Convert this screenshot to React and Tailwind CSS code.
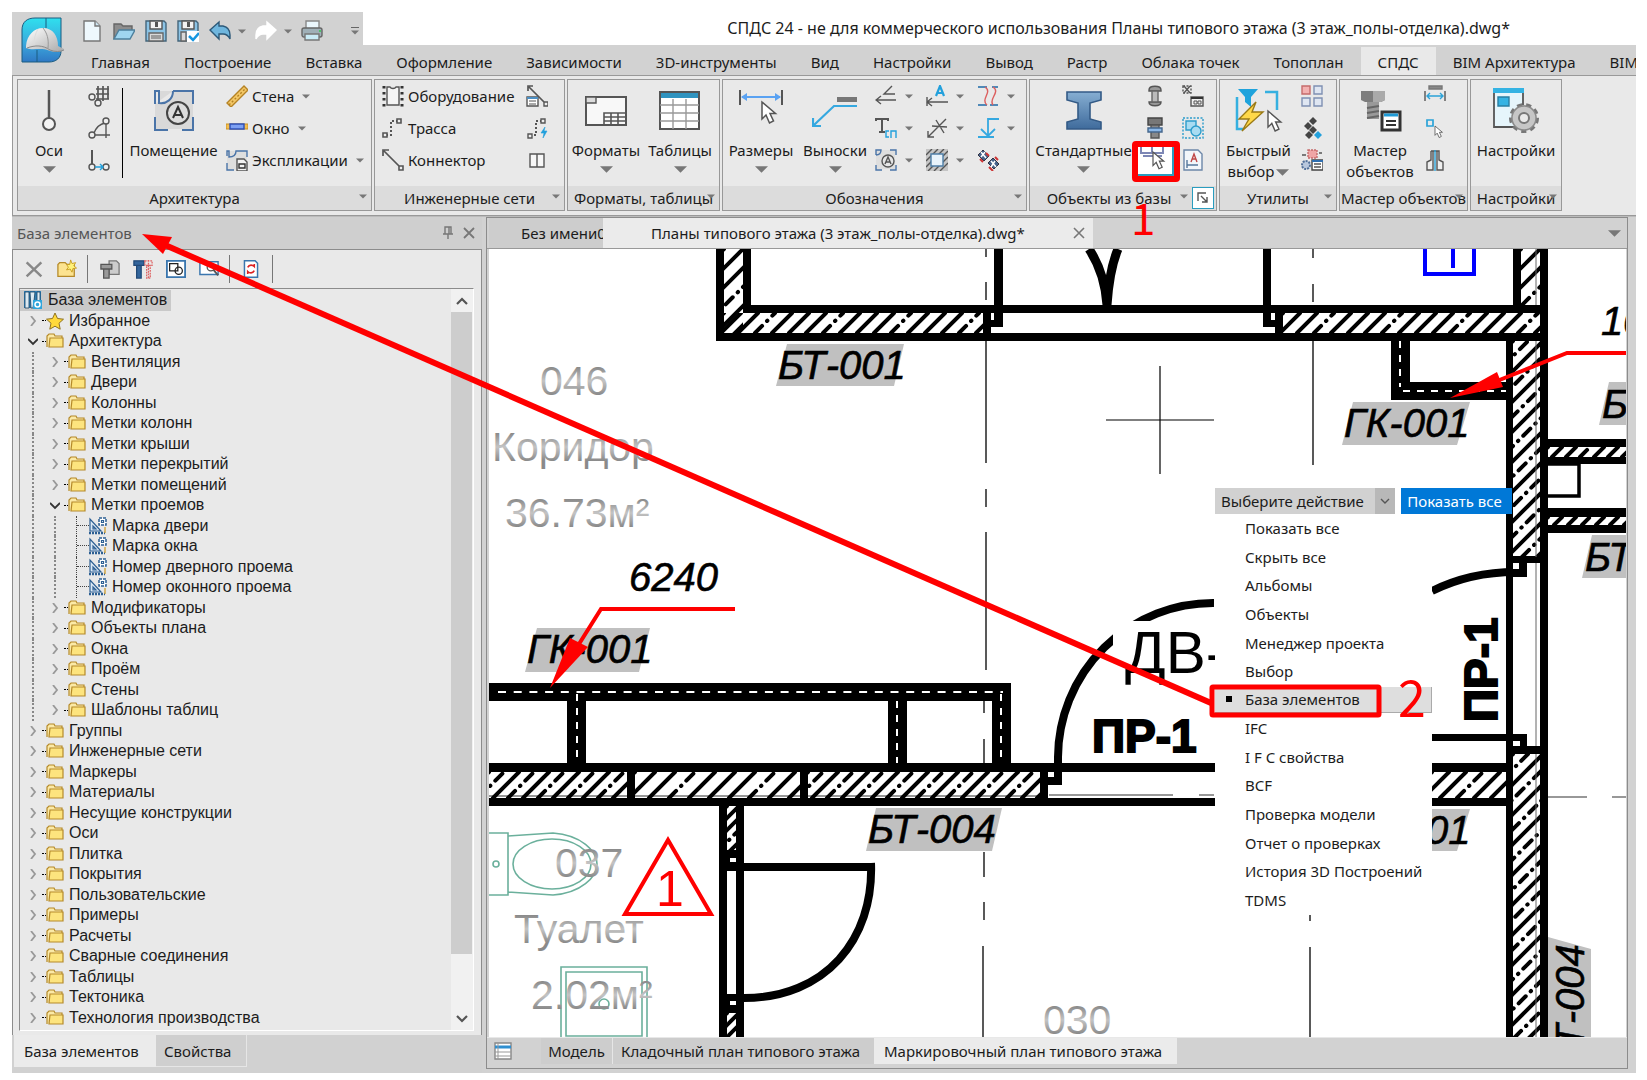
import { useState } from 'react';
import clsx from 'clsx';

/* ---------- small shared bits ---------- */

function Ico({ children, box = '0 0 22 22', className = 'size-[22px]' }) {
  return (
    <svg viewBox={box} className={clsx('shrink-0', className)} fill="none" stroke="#555" strokeWidth="1.4" aria-hidden="true">
      {children}
    </svg>
  );
}

function Down({ big }) {
  return (
    <svg viewBox="0 0 12 6" className={big ? 'h-[7px] w-[13px]' : 'h-[5px] w-2'} aria-hidden="true">
      <path d="M0 0h12L6 6z" fill="#777" />
    </svg>
  );
}

const Cursor = ({ x = 0, y = 0, s = 1 }) => (
  <path
    transform={`translate(${x} ${y}) scale(${s})`}
    d="M0 0v17l4-4 3.500 8 4-2-3.500-7.500h5.500z"
    fill="#fff"
    stroke="#555"
    strokeWidth="1.500"
  />
);

/* ---------- quick access icons ---------- */

const quick = [
  {
    name: 'Новый',
    icon: (
      <Ico>
        <path d="M3 1h11l5 5v15H3z" fill="#eef8fd" stroke="#777" />
        <path d="M14 1v5h5" fill="#cfe6f2" stroke="#777" />
      </Ico>
    ),
  },
  {
    name: 'Открыть',
    icon: (
      <Ico>
        <path d="M1 19V4h7l2 2h9v4" fill="#8d8d8d" stroke="#666" />
        <path d="M1 19l5-9h16l-5 9z" fill="#9fd5f0" stroke="#4c7f9c" />
      </Ico>
    ),
  },
  {
    name: 'Сохранить',
    icon: (
      <Ico>
        <path d="M1 1h18l2 2v18H1z" fill="#8cc4e6" stroke="#44657b" />
        <path d="M5 1h12v8H5z" fill="#f3f3f3" stroke="#555" />
        <path d="M10 2h3v5h-3z" fill="#555" stroke="none" />
        <path d="M4 13h14v8H4z" fill="#d9d9d9" stroke="#666" />
        <path d="M6 16h10M6 18h10" stroke="#888" />
      </Ico>
    ),
  },
  {
    name: 'Сохранить как',
    icon: (
      <Ico>
        <path d="M1 1h18l2 2v18H1z" fill="#8cc4e6" stroke="#44657b" />
        <path d="M5 1h12v8H5z" fill="#f3f3f3" stroke="#555" />
        <path d="M10 2h3v5h-3z" fill="#555" stroke="none" />
        <path d="M4 12h5v9H4z" fill="#d9d9d9" stroke="#666" />
        <path d="M10 11h12v11H10z" fill="#fff" stroke="none" />
        <path d="M12 16l4 4 6-7" stroke="#1596e0" strokeWidth="2.500" />
      </Ico>
    ),
  },
  {
    name: 'Отменить',
    more: true,
    icon: (
      <Ico>
        <path d="M1 10l9-8v4h4c5 1 7 5 7 9v4c-2-4-4-5-7-5h-4v5z" fill="#6fb6de" stroke="#2c5878" />
      </Ico>
    ),
  },
  {
    name: 'Вернуть',
    more: true,
    icon: (
      <Ico>
        <path d="M21 10l-9-8v4H8c-5 1-7 5-7 9v4c2-4 4-5 7-5h4v5z" fill="#fff" stroke="#fff" />
      </Ico>
    ),
  },
  {
    name: 'Печать',
    icon: (
      <Ico>
        <path d="M5 8V1h13v7" fill="#eaf6fc" stroke="#888" />
        <rect x="1" y="8" width="20" height="9" rx="2" fill="#9fb0b8" stroke="#666" />
        <path d="M4 17v-3h14v6H4z" fill="#c9ecf7" stroke="#777" />
        <path d="M18 11h2" stroke="#4fc36c" strokeWidth="2" />
      </Ico>
    ),
  },
];

function Logo() {
  return (
    <svg viewBox="0 0 43 46" className="h-[46px] w-[43px]" aria-hidden="true">
      <defs>
        <linearGradient id="lg" x1="0" y1="0" x2="0" y2="1">
          <stop offset="0" stopColor="#2fe0ee" />
          <stop offset=".6" stopColor="#3ba6dc" />
          <stop offset="1" stopColor="#2f78c4" />
        </linearGradient>
        <linearGradient id="hl" x1="0" y1="0" x2="1" y2="1">
          <stop offset="0" stopColor="#ffffff" />
          <stop offset="1" stopColor="#a8a8a8" />
        </linearGradient>
      </defs>
      <path d="M14 1h26v33c0 7-5 11-12 11H1V13C1 5 6 1 14 1z" fill="url(#lg)" stroke="#1b5c80" />
      <path d="M25 1v12M16 33v12" stroke="#1b5c80" />
      <path d="M5 29C6 18 13 11 22 11c10 0 15 8 15 18l6 3c0 3-8 4-14 2C20 30 12 34 5 31z" fill="url(#hl)" />
      <path d="M22 11c4 5 6 11 5 20" stroke="#999" fill="none" />
      <path d="M17 12c-3 5-4 10-4 17" stroke="#ddd" fill="none" />
      <path d="M6 31c8-3 16-3 23 2 5 2 10 2 14 0" stroke="#8a8a8a" fill="none" />
    </svg>
  );
}

/* ---------- ribbon icons ---------- */

const ic = {
  axis: (
    <Ico box="0 0 16 44" className="h-11 w-4">
      <path d="M8 2v28" strokeWidth="2.500" />
      <circle cx="8" cy="36" r="6" fill="#f4f4f4" strokeWidth="2" />
    </Ico>
  ),
  axisGrid: (
    <Ico>
      <path d="M8 4h13M8 9h13M8 14h13M10 1v14M15 1v15M20 1v13" strokeWidth="1.700" />
      <circle cx="4" cy="12" r="3" fill="#eee" />
      <circle cx="10" cy="18" r="3" fill="#eee" />
    </Ico>
  ),
  axisArc: (
    <Ico>
      <path d="M6 18h16M18 6v15M6 16C8 11 12 7 17 6" />
      <circle cx="18" cy="4" r="3" fill="#eee" />
      <circle cx="4" cy="18" r="3" fill="#eee" />
    </Ico>
  ),
  axisMove: (
    <Ico>
      <path d="M4 1v14" strokeWidth="2" />
      <circle cx="4" cy="18" r="3" fill="#eee" />
      <circle cx="18" cy="18" r="3" fill="#eee" />
      <path d="M7 18h8M12 15l3 3-3 3" stroke="#22a0dc" />
    </Ico>
  ),
  room: (
    <Ico box="0 0 42 44" className="h-11 w-[42px]">
      <path d="M2 3h38v38H2z" fill="#d9d9d9" stroke="none" />
      <path d="M2 16V3h4v12c8 1 14-4 14-12" fill="#e9e9e9" stroke="#4a74a8" strokeWidth="2" />
      <path d="M20 3h20v13M2 29v13h13M29 42h11V29" stroke="#4a74a8" strokeWidth="2" />
      <circle cx="25" cy="25" r="11" fill="#dcdcdc" stroke="#444" strokeWidth="2" />
      <path d="M20 30l5-11 5 11M22 27h6" stroke="#333" strokeWidth="2" />
    </Ico>
  ),
  wall: (
    <Ico>
      <path d="M1 18L18 1l4 4L5 22z" fill="#f3c766" stroke="#b58324" />
      <path d="M3 20L20 3" stroke="#b58324" strokeDasharray="2 2" />
    </Ico>
  ),
  windowI: (
    <Ico>
      <path d="M0 7h22v5H0z" fill="#f5bf4e" stroke="#c89127" strokeWidth="1" />
      <path d="M4 7h14v5H4z" fill="#7da0f2" stroke="#2e50b8" />
    </Ico>
  ),
  expl: (
    <Ico>
      <path d="M1 2h20v19H1z" fill="#dedede" stroke="none" />
      <path d="M1 7V2h2v6c4 0 7-2 7-6h11v6M1 14v7h7" stroke="#4a74a8" />
      <path d="M11 10h7l3 3v9H11z" fill="#f2f2f2" stroke="#555" />
      <path d="M13 15h6v4h-6z" stroke="#333" />
    </Ico>
  ),
  equip: (
    <Ico>
      <path d="M5 2h3c1 2 5 2 6 0h3v18H5z" fill="#f5f5f5" />
      <path d="M2 1v21M20 1v21" stroke="#333" strokeWidth="3" strokeDasharray="2.500 3.500" />
    </Ico>
  ),
  route: (
    <Ico>
      <path d="M4 18h5V4h7" strokeDasharray="2 2" strokeWidth="2" />
      <path d="M1 16h4v4H1zM15 2h4v4h-4z" fill="#eee" strokeWidth="1.600" />
    </Ico>
  ),
  connector: (
    <Ico>
      <path d="M2 2l15 15M1 7V1h6" strokeWidth="1.700" />
      <path d="M17 17h4v4h-4z" fill="#eee" strokeWidth="1.600" />
    </Ico>
  ),
  connTable: (
    <Ico>
      <path d="M3 2l15 15M2 6V1h5" strokeWidth="1.700" />
      <path d="M18 17h4v4h-4z" fill="#eee" />
      <path d="M1 12h11v9H1z" fill="#fff" />
      <path d="M1 13h11" stroke="#4c8fc4" strokeWidth="2" />
      <path d="M3 16h7M3 19h7" strokeWidth="1" />
    </Ico>
  ),
  routeBolt: (
    <Ico>
      <path d="M4 18h6V4h6" strokeDasharray="2 2" strokeWidth="2" />
      <path d="M2 17h4v4H2zM15 2h4v4h-4z" fill="#eee" />
      <path d="M19 10l-4 6h3l-1 5 4-7h-3z" fill="#22a0dc" stroke="#22a0dc" strokeWidth=".6" />
    </Ico>
  ),
  split: (
    <Ico>
      <path d="M4 5h7v13H4zM11 5h7v13h-7z" fill="#f7f7f7" />
    </Ico>
  ),
  format: (
    <Ico box="0 0 42 44" className="h-11 w-[42px]">
      <path d="M1 9h40v28H1z" fill="#f8f8f8" strokeWidth="2" />
      <path d="M1 9h10v6H1z" fill="#ddd" />
      <path d="M19 25h22v12H19zM19 29h22M19 33h22M26 25v12M33 25v12" strokeWidth="1.600" />
    </Ico>
  ),
  table: (
    <Ico box="0 0 42 44" className="h-11 w-[42px]">
      <path d="M1 4h39v37H1z" fill="#fff" strokeWidth="2" />
      <path d="M2 5h37v5H2z" fill="#2f93bf" stroke="none" />
      <path d="M1 17h39M1 25h39M1 33h39M14 11v30M27 11v30" stroke="#999" />
    </Ico>
  ),
  dims: (
    <Ico box="0 0 46 44" className="h-11 w-[46px]">
      <path d="M2 2v15M44 2v15" strokeWidth="2" />
      <path d="M4 9h38" stroke="#5aa2f2" strokeWidth="2" />
      <path d="M9 5L3 9l6 4zM37 5l6 4-6 4z" fill="#5aa2f2" stroke="none" />
      <Cursor x={24} y={14} />
    </Ico>
  ),
  leader: (
    <Ico box="0 0 46 44" className="h-11 w-[46px]">
      <path d="M25 9h20v5H25z" fill="#777" stroke="none" />
      <path d="M45 18H22L2 37M1 30v8h8" stroke="#35a8e0" strokeWidth="2.200" />
    </Ico>
  ),
  d1: (
    <Ico>
      <path d="M1 15h20M6 11l-5 4 5 4M20 9H9l8-8" />
    </Ico>
  ),
  d2: (
    <Ico>
      <path d="M1 12v9M1 17h21M6 13l-5 4 5 4" />
      <path d="M10 11l4-10 4 10M12 8h5" stroke="#22a0dc" strokeWidth="2.200" />
    </Ico>
  ),
  d3: (
    <Ico>
      <path d="M1 2h9M15 2h6M1 20h9M13 20h8" stroke="#4f89b8" strokeWidth="1.800" />
      <path d="M8 2c8 5-5 12 2 18M16 2c8 5-5 12 0 18" stroke="#dc5f5f" />
    </Ico>
  ),
  d4: (
    <Ico>
      <path d="M1 4V2h12v2M7 2v13M4 15h6" strokeWidth="2" />
      <path d="M14 14h-3v6h3M16 21v-7h5v7" stroke="#22a0dc" />
    </Ico>
  ),
  d5: (
    <Ico>
      <path d="M20 2L2 20M2 14v6h6M6 9l15 1M10 3l8 13" />
    </Ico>
  ),
  d6: (
    <Ico>
      <path d="M22 2H11v17M4 12l7 7 7-7M1 20h16" stroke="#35a8e0" strokeWidth="1.800" />
    </Ico>
  ),
  d7: (
    <Ico>
      <path d="M1 1h19v19H1z" fill="#dedede" stroke="none" />
      <path d="M1 6V1h5c0 4-2 5-5 5M15 1h6v5M1 16v5h6M15 21h6v-5" stroke="#4a74a8" />
      <circle cx="13" cy="12" r="6" fill="#e6e6e6" />
      <path d="M10 15l3-7 3 7M11 13h4" />
    </Ico>
  ),
  d8: (
    <Ico>
      <path d="M0 0h22v22H0z" fill="#c5c5c5" stroke="none" />
      <path d="M0 6l6-6M0 12L12 0M0 18L18 0M2 22L22 2M8 22L22 8M14 22l8-8" stroke="#555" />
      <path d="M5 5h12v12H5z" fill="#e8f3fb" stroke="#4f7fa8" />
    </Ico>
  ),
  d9: (
    <Ico>
      <g strokeWidth="1">
        <path d="M1 6l5-5 6 6-5 5zM11 14l5-5 6 6-5 5z" fill="#46638c" stroke="#334" />
        <path d="M4 3l5 6M8 3l-4 5M14 12l5 6M18 12l-4 6" stroke="#fff" strokeWidth="1.500" />
        <path d="M9 4l3 3M3 10l3 3M12 18l4 4M18 8l3 3" stroke="#c33" strokeWidth="2" />
      </g>
    </Ico>
  ),
  beam: (
    <Ico box="0 0 38 44" className="h-11 w-[38px]">
      <defs>
        <linearGradient id="beam" x1="0" y1="0" x2="0" y2="1">
          <stop offset="0" stopColor="#86aed2" />
          <stop offset="1" stopColor="#3f6b9c" />
        </linearGradient>
      </defs>
      <path d="M2 4h34v8l-11 3v16l11 3v7H2v-7l11-3V15L2 12z" fill="url(#beam)" stroke="#335a86" strokeWidth="1.600" />
    </Ico>
  ),
  rivet: (
    <Ico>
      <path d="M5 5c0-5 12-5 12 0v1H5zM5 17h12c0 5-12 5-12 0z" fill="#999" stroke="#555" />
      <path d="M8 6h6v11H8z" fill="#bbb" stroke="#666" />
    </Ico>
  ),
  bolt: (
    <Ico>
      <path d="M4 1h14v7H4z" fill="#777" stroke="#444" />
      <path d="M7 8h8v13H7z" fill="#888" stroke="#555" />
      <path d="M4 11h14v4H4z" fill="#8bb8e8" stroke="#44668c" />
    </Ico>
  ),
  node: (
    <Ico>
      <path d="M1 1h8v7H1z" strokeDasharray="2 1.500" />
      <path d="M2 1l6 7M8 1L2 8" />
      <path d="M9 12h12v9H9z" fill="#eee" />
      <path d="M9 13h12" stroke="#333" strokeWidth="2" />
      <path d="M12 16h3v3h-3zM16 16h3v3h-3z" strokeWidth="1" />
    </Ico>
  ),
  groupSel: (
    <Ico>
      <path d="M1 1h20v20H1z" stroke="#2c9ccb" strokeDasharray="2 1.500" />
      <path d="M4 4h10v9H4z" fill="#a8dcf2" stroke="#2c9ccb" />
      <circle cx="14" cy="14" r="5" fill="#a8dcf2" stroke="#2c9ccb" />
    </Ico>
  ),
  docA: (
    <Ico>
      <path d="M2 1h14l4 4v16H2z" fill="#f3f6fa" stroke="#6c87a8" />
      <path d="M9 13l3-8 3 8M10 10h4" stroke="#c04545" />
      <path d="M5 11v8M5 16h11" stroke="#55779c" />
    </Ico>
  ),
  pick: (
    <Ico box="0 0 34 28" className="h-7 w-[34px]">
      <path d="M3 1v6h22V1M14 1v6M5 10h19" stroke="#7d87b5" strokeWidth="2" />
      <Cursor x={15} y={6} s={0.8} />
    </Ico>
  ),
  fast: (
    <Ico box="0 0 48 46" className="h-[46px] w-12">
      <path d="M2 10v32h6M30 5h12v18" stroke="#35b0e0" strokeWidth="2.500" />
      <path d="M3 2h20l-7 8v10l-6-5v-5z" fill="#1fa3dc" stroke="none" />
      <path d="M21 15L4 32h10l-7 12 21-19H17z" fill="#ffd84a" stroke="#9a7a16" />
      <Cursor x={33} y={24} s={0.95} />
    </Ico>
  ),
  squares: (
    <Ico>
      <path d="M1 1h8v8H1z" fill="#f3b1b1" stroke="#c56b6b" />
      <path d="M13 1h8v8h-8zM1 13h8v8H1zM13 13h8v8h-8z" fill="#dfe6f2" stroke="#7f90b3" />
    </Ico>
  ),
  dots: (
    <Ico>
      <g fill="#444" stroke="none">
        <path d="M12 0l4 4-4 4-4-4zM7 5l4 4-4 4-4-4zM12 9l4 4-4 4-4-4zM8 14l4 4-4 4-4-4z" />
        <path d="M17 14l4 4-4 4-4-4z" fill="#22a0dc" />
      </g>
    </Ico>
  ),
  gears: (
    <Ico>
      <path d="M7 1h9v8H7z" fill="#f0a5a5" stroke="#c56b6b" strokeDasharray="2 1" />
      <circle cx="5" cy="16" r="4" fill="#b8c7dd" stroke="#52709a" strokeWidth="2" strokeDasharray="2 1" />
      <path d="M11 11h11v10H11z" fill="#fff" stroke="#444" />
      <path d="M11 12h11" stroke="#2f6fb0" strokeWidth="2" />
      <path d="M13 15h7M13 18h7M1 6h4M18 4h3" />
    </Ico>
  ),
  master: (
    <Ico box="0 0 44 44" className="size-11">
      <path d="M3 3h24v9l-4 2H7l-4-2z" fill="#7d7d7d" stroke="none" />
      <path d="M15 3h12v9l-4 2h-8z" fill="#aaa" stroke="none" />
      <path d="M9 14h12v17H9z" fill="#999" stroke="none" />
      <path d="M9 20l12-2M9 25l12-2M9 30l12-2" stroke="#666" strokeWidth="2" />
      <path d="M24 24h18v18H24z" fill="#fff" stroke="#333" strokeWidth="3" />
      <path d="M26 27h14" stroke="#1f9ad6" strokeWidth="3" />
      <path d="M28 33h10M28 37h10" stroke="#333" strokeWidth="2" />
    </Ico>
  ),
  m1: (
    <Ico>
      <path d="M5 1h13v3H5z" fill="#888" stroke="#777" />
      <path d="M1 6v10M21 6v10" />
      <path d="M3 11h16M6 8l-3 3 3 3M16 8l3 3-3 3" stroke="#2ba3d8" />
    </Ico>
  ),
  m2: (
    <Ico>
      <path d="M3 3h6v6H3z" stroke="#2ba3d8" strokeWidth="1.700" />
      <Cursor x={11} y={9} s={0.55} />
    </Ico>
  ),
  m3: (
    <Ico>
      <path d="M7 2h8v9l4 2v8h-6V2M9 2v19H3v-8l4-2V2" fill="#eee" stroke="#555" />
      <path d="M11 1v21" stroke="#2ba3d8" />
    </Ico>
  ),
  settings: (
    <Ico box="0 0 48 46" className="h-[46px] w-12">
      <path d="M2 2h29v38H2z" fill="#e6f5fb" strokeWidth="1.800" />
      <path d="M1 1h31v5H1z" fill="#35b3e3" stroke="none" />
      <path d="M6 10h11v9H6z" fill="#35b3e3" stroke="#287fa3" />
      <circle cx="32" cy="31" r="13" fill="#bdbdbd" stroke="#777" strokeWidth="4" strokeDasharray="5 4" />
      <circle cx="32" cy="31" r="12" fill="#c6c6c6" stroke="#8a8a8a" />
      <circle cx="32" cy="31" r="5" fill="#e9e9e9" stroke="#777" strokeWidth="2" />
    </Ico>
  ),
};

/* ---------- ribbon ---------- */

const tabs = [
  'Главная', 'Построение', 'Вставка', 'Оформление', 'Зависимости', '3D-инструменты', 'Вид', 'Настройки',
  'Вывод', 'Растр', 'Облака точек', 'Топоплан', 'СПДС', 'BIM Архитектура', 'BIM',
];

function Panel({ title, className, children, extra }) {
  return (
    <section className={clsx('flex shrink-0 flex-col border border-[#989898] bg-[#e9e9e9]', className)}>
      <div className="flex h-[106px] overflow-hidden">{children}</div>
      <div className="relative flex h-6 items-center justify-center bg-[#dcdcdc] whitespace-nowrap">
        <span className={clsx('w-full overflow-hidden text-center', extra && 'pr-1')}>{title}</span>
        <span className={clsx('absolute top-2', extra ? 'right-7' : 'right-1')}>
          <Down />
        </span>
        {extra}
      </div>
    </section>
  );
}

function Big({ icon, label, more, className }) {
  return (
    <button className={clsx('flex shrink-0 flex-col items-center whitespace-nowrap', className)}>
      <span className="flex h-[60px] items-center">{icon}</span>
      <span className="leading-[21px] whitespace-pre">{label}</span>
      {more && <span className="flex h-4 items-center"><Down big /></span>}
    </button>
  );
}

function Small({ icon, label, more, className }) {
  return (
    <button className={clsx('flex h-8 items-center gap-1 whitespace-nowrap', className)} aria-label={label ? undefined : 'Команда'}>
      {icon}
      {label && <span>{label}</span>}
      {more && <span className="ml-1"><Down /></span>}
    </button>
  );
}

function Ribbon() {
  return (
    <div className="flex gap-[2px] overflow-hidden border-b border-l border-[#999] bg-[#e9e9e9] pt-[3px] pb-1 pl-1">
      <Panel title="Архитектура" className="w-[355px]">
        <Big icon={ic.axis} label="Оси" more className="w-[62px]" />
        <div className="w-[42px] pl-2">
          <Small icon={ic.axisGrid} />
          <Small icon={ic.axisArc} />
          <Small icon={ic.axisMove} />
        </div>
        <div className="my-2 w-px bg-black" />
        <Big icon={ic.room} label="Помещение" className="w-[101px]" />
        <div className="pl-[2px]">
          <Small icon={ic.wall} label="Стена" more />
          <Small icon={ic.windowI} label="Окно" more />
          <Small icon={ic.expl} label="Экспликации" more />
        </div>
      </Panel>
      <Panel title="Инженерные сети" className="w-[191px]">
        <div className="w-[151px] pl-[7px]">
          <Small icon={ic.equip} label="Оборудование" />
          <Small icon={ic.route} label="Трасса" />
          <Small icon={ic.connector} label="Коннектор" />
        </div>
        <div>
          <Small icon={ic.connTable} />
          <Small icon={ic.routeBolt} />
          <Small icon={ic.split} />
        </div>
      </Panel>
      <Panel title="Форматы, таблицы" className="w-[153px]">
        <Big icon={ic.format} label="Форматы" more className="w-[76px]" />
        <Big icon={ic.table} label="Таблицы" more className="w-[72px]" />
      </Panel>
      <Panel title="Обозначения" className="w-[305px]">
        <Big icon={ic.dims} label="Размеры" more className="w-[76px]" />
        <Big icon={ic.leader} label="Выноски" more className="w-[72px]" />
        <div className="w-[51px] pl-1">
          <Small icon={ic.d1} more />
          <Small icon={ic.d4} more />
          <Small icon={ic.d7} more />
        </div>
        <div className="w-[51px] pl-1">
          <Small icon={ic.d2} more />
          <Small icon={ic.d5} more />
          <Small icon={ic.d8} more />
        </div>
        <div className="w-[51px] pl-1">
          <Small icon={ic.d3} more />
          <Small icon={ic.d6} more />
          <Small icon={ic.d9} />
        </div>
      </Panel>
      <Panel
        title="Объекты из базы"
        className="w-[188px]"
        extra={
          <button className="mr-[2px] flex size-[22px] shrink-0 items-center justify-center border border-[#2a9dbf] bg-white" aria-label="Параметры">
            <Ico className="size-3" box="0 0 12 12">
              <path d="M1 9V1h8M4 4l6 6M10 5v5H5" />
            </Ico>
          </button>
        }
      >
        <Big icon={ic.beam} label="Стандартные" more className="w-[107px]" />
        <div className="flex w-[36px] flex-col items-center">
          <Small icon={ic.rivet} />
          <Small icon={ic.bolt} />
          <button className="border-2 border-[#2a9dbf] bg-white" aria-label="База элементов">{ic.pick}</button>
        </div>
        <div className="pl-[9px]">
          <Small icon={ic.node} />
          <Small icon={ic.groupSel} />
          <Small icon={ic.docA} />
        </div>
      </Panel>
      <Panel title="Утилиты" className="w-[118px]">
        <Big
          icon={ic.fast}
          className="w-[77px]"
          label={
            <>
              {'Быстрый\nвыбор'}
              <span className="ml-[2px] inline-block align-middle"><Down big /></span>
            </>
          }
        />
        <div className="pl-1">
          <Small icon={ic.squares} />
          <Small icon={ic.dots} />
          <Small icon={ic.gears} />
        </div>
      </Panel>
      <Panel title="Мастер объектов" className="w-[129px]">
        <Big icon={ic.master} label={'Мастер\nобъектов'} className="w-[80px]" />
        <div className="pl-1">
          <Small icon={ic.m1} />
          <Small icon={ic.m2} />
          <Small icon={ic.m3} />
        </div>
      </Panel>
      <Panel title="Настройки" className="w-[92px]">
        <Big icon={ic.settings} label="Настройки" className="w-full" />
      </Panel>
    </div>
  );
}

function Header() {
  return (
    <header className="flex">
      <div className="w-[62px] shrink-0 border-b border-[#999] bg-[#d2d2d2] pt-[5px] pl-[9px]">
        <Logo />
      </div>
      <div className="min-w-0 flex-1">
        <div className="flex h-[33px]">
          <div className="flex w-[289px] shrink-0 items-center bg-[#d2d2d2] pt-[5px] pl-[2px]">
            {quick.map((q) => (
              <span key={q.name} className="flex items-center">
                <button className="mx-[5px]" aria-label={q.name}>{q.icon}</button>
                {q.more && <span className="mr-1 ml-[2px]"><Down /></span>}
              </span>
            ))}
            <span className="mr-1 ml-auto flex flex-col items-center gap-[2px]">
              <span className="h-px w-2 bg-[#666]" />
              <Down />
            </span>
          </div>
          <h1 className="flex-1 truncate pr-[126px] text-right text-[16px] leading-[32px]">
            СПДС 24 - не для коммерческого использования Планы типового этажа (3 этаж_полы-отделка).dwg*
          </h1>
        </div>
        <nav className="flex h-[31px] items-end overflow-hidden border-b border-[#999] bg-[#d2d2d2] whitespace-nowrap">
          {tabs.map((t) => (
            <button
              key={t}
              className={clsx('h-7 shrink-0 px-[17px] pt-[2px]', t === 'СПДС' && 'bg-[#e9e9e9]')}
            >
              {t}
            </button>
          ))}
        </nav>
      </div>
    </header>
  );
}

/* ---------- element base tree ---------- */

const sub = (names) => names.map((n) => ({ level: 2, name: n }));

const tree = [
  { level: 1, name: 'Избранное', icon: 'star' },
  { level: 1, name: 'Архитектура', open: true },
  ...sub(['Вентиляция', 'Двери', 'Колонны', 'Метки колонн', 'Метки крыши', 'Метки перекрытий', 'Метки помещений']),
  { level: 2, name: 'Метки проемов', open: true },
  { level: 3, name: 'Марка двери' },
  { level: 3, name: 'Марка окна' },
  { level: 3, name: 'Номер дверного проема' },
  { level: 3, name: 'Номер оконного проема', last: true },
  ...sub(['Модификаторы', 'Объекты плана', 'Окна', 'Проём', 'Стены', 'Шаблоны таблиц']),
  ...[
    'Группы', 'Инженерные сети', 'Маркеры', 'Материалы', 'Несущие конструкции', 'Оси', 'Плитка', 'Покрытия',
    'Пользовательские', 'Примеры', 'Расчеты', 'Сварные соединения', 'Таблицы', 'Тектоника', 'Технология производства',
  ].map((n) => ({ level: 1, name: n })),
];

function Folder() {
  return (
    <Ico box="0 0 18 16" className="h-4 w-[18px]">
      <path d="M1 14V3l2-2h5l1 2h7v3" fill="#fbe9a6" stroke="#b58a2a" strokeWidth="1.200" />
      <path d="M4 5h13v9H3z" fill="#fde47e" stroke="#b58a2a" strokeWidth="1.200" />
    </Ico>
  );
}

function Star() {
  return (
    <Ico box="0 0 18 18" className="size-[18px]">
      <path d="M9 1l2.500 5.500 6 .7-4.500 4 1.200 6L9 14.200 3.800 17.200 5 11.200.5 7.200l6-.7z" fill="#ffd93b" stroke="#8f7320" strokeWidth="1" />
    </Ico>
  );
}

function Mark() {
  return (
    <Ico box="0 0 18 18" className="size-[18px]">
      <path d="M1 2v12h11zM4 9v3h3z" fill="#dce9f5" stroke="#2c5f93" strokeWidth="1.200" />
      <path d="M0 16h16" stroke="#2c5f93" strokeWidth="2.500" strokeDasharray="2 1" />
      <path d="M10 1h7v7h-7z" fill="#fff" stroke="#2c5f93" strokeWidth="1.500" strokeDasharray="3 1" />
      <path d="M12.500 3.500h2v2h-2z" stroke="#2c5f93" strokeWidth="1.200" />
      <path d="M16 10v6" stroke="#d1a23a" />
    </Ico>
  );
}

function Chevron({ open }) {
  return (
    <Ico box="0 0 10 10" className="size-[10px]">
      {open ? <path d="M0 3l5 5 5-5" stroke="#333" strokeWidth="1.800" /> : <path d="M3 0l4 5-4 5" stroke="#999" strokeWidth="1.800" />}
    </Ico>
  );
}

function TreeRow({ node }) {
  const { level, name, open, icon, last } = node;
  return (
    <li className="flex flex-1 items-center">
      {level > 1 && <span className="ml-3 h-full w-0 border-l-2 border-dotted border-[#888]" />}
      {level === 3 && <span className="ml-5 h-full w-0 border-l-2 border-dotted border-[#888]" />}
      {level === 3 ? (
        <span className="ml-5 flex h-full w-[13px] flex-col border-l border-dotted border-[#444]">
          <span className="h-1/2 border-b border-dotted border-[#444]" />
          {last && <span className="h-1/2 bg-[#e9e9e9]" />}
        </span>
      ) : (
        <>
          <span className={clsx('flex', level === 1 ? 'ml-2' : 'ml-4')}><Chevron open={open} /></span>
          <span className="ml-1 w-1 border-b border-dotted border-black" />
        </>
      )}
      {level === 3 ? <Mark /> : icon ? <Star /> : <Folder />}
      <button className="ml-[5px] leading-[20px] whitespace-nowrap">{name}</button>
    </li>
  );
}

function ToolDivider() {
  return <span className="mx-[10px] h-7 w-px bg-[#777]" />;
}

function Sidebar() {
  return (
    <aside className="flex w-[470px] shrink-0 flex-col">
      <div className="flex h-8 shrink-0 items-center bg-[#cfcfcf] pl-[5px] text-[#555]">
        <span className="flex-1">База элементов</span>
        <button className="mr-1" aria-label="Закрепить">
          <Ico box="0 0 14 14" className="size-[14px]">
            <path d="M4 1h6v7H4zM2 8h10M7 8v5M8 1v7" stroke="#777" />
          </Ico>
        </button>
        <button className="mr-[3px] p-1" aria-label="Закрыть">
          <Ico box="0 0 12 12" className="size-3">
            <path d="M1 1l10 10M11 1L1 11" stroke="#777" strokeWidth="1.800" />
          </Ico>
        </button>
      </div>
      <div className="flex min-h-0 flex-1 flex-col border-t border-r border-l border-[#8c8c8c] bg-[#e9e9e9] pr-[7px] pb-1 pl-[6px]">
        <div className="flex h-[38px] shrink-0 items-center pl-[6px]">
          <button className="mr-[14px]" aria-label="Удалить">
            <Ico className="size-[18px]"><path d="M2 3l18 17M20 3L2 20" stroke="#888" strokeWidth="3" /></Ico>
          </button>
          <button aria-label="Новая папка">
            <Ico className="size-5">
              <path d="M1 19V6l2-2h6l2 2h8v13z" fill="#fce390" stroke="#b58a2a" />
              <path d="M15 1l1.500 4 4-1-2 3.500 3 2.500-4 .5-1 4-2-3.500-4 1 2-3-2-3 3.500 0z" fill="#fff27a" stroke="#c79a20" strokeWidth="1" />
            </Ico>
          </button>
          <ToolDivider />
          <div className="flex gap-[13px] pl-[2px]">
            <button aria-label="Вставить">
              <Ico className="size-5">
                <path d="M10 2h8l3 3v12H10z" fill="#ccc" stroke="#777" />
                <path d="M1 6h12v5H1zM4 11h6v10H4z" fill="#999" stroke="#555" />
              </Ico>
            </button>
            <button aria-label="Обновить объекты">
              <Ico className="size-5">
                <path d="M1 2h11v5H1zM4 7h5v14H4z" fill="#33659c" stroke="#224a78" />
                <path d="M13 2h8v5h-8zM15 7h4v14h-4zM17 1v21" stroke="#d66" strokeDasharray="2 1" />
              </Ico>
            </button>
            <button aria-label="Показать фигуры">
              <Ico className="size-5">
                <path d="M1 2h20v18H1z" fill="#fff" stroke="#3a76ae" strokeWidth="2" />
                <path d="M4 5h9v8H4z" stroke="#222" />
                <circle cx="14" cy="13" r="4" stroke="#222" />
              </Ico>
            </button>
            <button aria-label="Поиск">
              <Ico className="size-5">
                <path d="M1 3h20v14H1z" fill="#fff" stroke="#3a76ae" strokeWidth="1.600" />
                <circle cx="13" cy="9" r="4" />
                <path d="M16 12l5 6" strokeWidth="2" />
              </Ico>
            </button>
          </div>
          <ToolDivider />
          <button className="mx-[2px]" aria-label="Обновить">
            <Ico className="size-[18px]">
              <path d="M3 1h13l3 3v17H3z" fill="#fff" stroke="#3a76ae" strokeWidth="1.800" />
              <path d="M7 9c2-4 6-3 8-1V5M15 13c-2 4-6 3-8 1v3" stroke="#d22" strokeWidth="2" />
            </Ico>
          </button>
          <ToolDivider />
        </div>
        <div className="flex min-h-0 flex-1 border border-t-[#8c8c8c] border-r-white border-b-white border-l-[#8c8c8c]">
          <ul className="flex flex-1 flex-col pt-px pb-[2px] font-['Liberation_Sans',sans-serif] text-[16px]">
            <li className="flex flex-1 items-center">
              <button className="flex h-full items-center gap-[6px] bg-[#c9c9c9] pr-1 pl-1 leading-[20px]">
                <Ico box="0 0 18 18" className="size-[18px]">
                  <path d="M0 0h17v17H0z" fill="#2f7fb5" stroke="none" />
                  <path d="M1 1h4v16H1zM6 1h5l-1 9-1 7H7zM13 1h3v9h-3z" fill="#dbe9f2" stroke="#16405f" strokeWidth=".8" />
                  <path d="M9 9h9v9H9z" fill="#2fa5dc" stroke="none" />
                  <circle cx="13.500" cy="13.500" r="2.500" stroke="#fff" strokeWidth="1.500" />
                </Ico>
                База элементов
              </button>
            </li>
            {tree.map((n) => <TreeRow key={n.name} node={n} />)}
          </ul>
          <div className="flex w-[22px] flex-col bg-[#f1f1f1]">
            <button className="flex h-[23px] shrink-0 items-center justify-center" aria-label="Вверх">
              <Ico box="0 0 12 8" className="h-2 w-3"><path d="M1 7l5-5 5 5" strokeWidth="2.200" /></Ico>
            </button>
            <div className="mr-px flex-[12] bg-[#cdcdcd]" />
            <div className="flex-1" />
            <button className="flex h-[23px] shrink-0 items-center justify-center" aria-label="Вниз">
              <Ico box="0 0 12 8" className="h-2 w-3"><path d="M1 1l5 5 5-5" strokeWidth="2.200" /></Ico>
            </button>
          </div>
        </div>
      </div>
      <div className="flex h-[38px] shrink-0 items-start bg-[#d1d1d1] pl-[2px]">
        <button className="h-8 w-[142px] bg-[#ebebeb] pl-[10px] text-left">База элементов</button>
        <button className="h-8 w-[91px] border-r border-b border-[#e6e6e6] bg-[#cfcfcf] pl-2 text-left">Свойства</button>
      </div>
    </aside>
  );
}

/* ---------- drawing ---------- */

// diagonal masonry hatch clipped to a wall rectangle
function Hatch({ x, y, w, h, step = 16, every = 4 }) {
  const id = `h${x}-${y}`;
  const lines = [];
  for (let k = x - h, i = 0; k < x + w; k += step, i++) lines.push({ k, dash: i % every === every - 1 });
  return (
    <g>
      <clipPath id={id}><rect x={x} y={y} width={w} height={h} /></clipPath>
      <g clipPath={`url(#${id})`} stroke="#000" strokeWidth="4" strokeLinecap="round">
        {lines.map(({ k, dash }) => (
          <line key={k} x1={k} y1={y + h} x2={k + h} y2={y} strokeDasharray={dash ? '10 7 0.500 7' : undefined} />
        ))}
      </g>
    </g>
  );
}

// [x1, y1, x2, y2] of every solid wall band
const solid = [
  [716, 249, 724, 341], [743, 249, 751, 313], [743, 305, 1548, 313], [716, 333, 1548, 341],
  [994, 249, 1003, 327], [983, 305, 991, 341], [991, 320, 1003, 327],
  [1263, 249, 1271, 327], [1263, 320, 1276, 327], [1275, 305, 1283, 341],
  [1513, 249, 1521, 313], [1540, 249, 1548, 1038], [1506, 333, 1513, 1038],
  [1391, 341, 1410, 400], [1391, 382, 1506, 400],
  [1548, 439, 1626, 447], [1548, 457, 1626, 464], [1548, 508, 1626, 517], [1548, 525, 1626, 533],
  [1506, 556, 1548, 563], [1513, 563, 1527, 577], [1506, 746, 1548, 754], [1506, 734, 1527, 741], [1520, 734, 1527, 748],
  [1432, 734, 1506, 741],
  [489, 683, 1011, 701], [567, 683, 586, 765], [888, 683, 907, 765], [992, 683, 1011, 765],
  [489, 763, 1506, 772], [489, 798, 1506, 806], [627, 763, 635, 806], [800, 763, 808, 806], [1040, 763, 1048, 806],
  [719, 806, 727, 1038], [736, 806, 744, 1038], [719, 850, 744, 871], [744, 863, 875, 871], [719, 994, 744, 1013],
];

const axes = [
  [986, 249, 257], [986, 282, 300], [986, 341, 463], [986, 489, 507], [986, 532, 670], [984, 701, 713], [984, 739, 765],
  [984, 852, 877], [984, 902, 920], [983, 946, 1038],
  [1313, 249, 258], [1313, 284, 302], [1313, 341, 465], [1310, 915, 921], [1310, 947, 1038],
];

function Tag({ x, y, children, bg }) {
  return (
    <g>
      {bg && <polygon points={bg} fill="#c0c0c0" />}
      <text x={x} y={y} fontSize="40" fontStyle="italic" fill="#000" stroke="#000" strokeWidth="0.600">{children}</text>
    </g>
  );
}

function Ghost({ x, y, children }) {
  return (
    <text x={x} y={y} fontSize="41" fill="url(#ghost)">{children}</text>
  );
}

function Plan() {
  return (
    <svg viewBox="489 249 1137 788" preserveAspectRatio="xMinYMin slice" className="absolute inset-0 h-full w-full font-['Liberation_Sans',sans-serif]" aria-label="План этажа">
      <defs>
        <linearGradient id="ghost" x1="0" y1="0" x2="0" y2="1">
          <stop offset=".2" stopColor="#8a8a8a" />
          <stop offset=".5" stopColor="#c4c4c4" />
          <stop offset=".8" stopColor="#8a8a8a" />
        </linearGradient>
      </defs>

      <Tag x={778} y={379} bg="787,344 904,344 894,386 776,386">БТ-001</Tag>
      <Tag x={527} y={663} bg="537,628 650,628 639,672 525,672">ГК-001</Tag>
      <Tag x={868} y={843} bg="876,808 1002,808 992,851 866,851">БТ-004</Tag>
      <Tag x={1344} y={437} bg="1353,402 1470,402 1457,445 1342,445">ГК-001</Tag>
      <Tag x={1345} y={844} bg="1353,809 1470,809 1457,851 1342,851">ГК-001</Tag>
      <Tag x={1602} y={418} bg="1609,382 1640,382 1640,425 1599,425">Б</Tag>
      <Tag x={1585} y={571} bg="1592,535 1640,535 1640,578 1582,578">БТ</Tag>
      <polygon points="1548,937 1591,949 1591,1038 1548,1038" fill="#c0c0c0" />
      <g transform="translate(1584 1072) rotate(-90)"><Tag x={0} y={0}>БТ-004</Tag></g>
      <Tag x={629} y={591}>6240</Tag>
      <Tag x={1601} y={335}>10</Tag>

      {axes.map(([x, a, b]) => <line key={`${x}-${a}`} x1={x} x2={x} y1={a} y2={b} stroke="#222" strokeWidth="1.500" />)}
      <path d="M489 796H1040M1049 795h124M1199 795h15M1548 797h39M1612 797h14" stroke="#333" strokeWidth="1.200" />

      <Hatch x={724} y={249} w={19} h={90} step={19} />
      <Hatch x={724} y={313} w={259} h={20} step={17} />
      <Hatch x={1283} y={313} w={257} h={20} step={17} />
      <Hatch x={1521} y={249} w={19} h={56} step={19} />
      <Hatch x={1513} y={341} w={27} h={216} step={15} every={2} />
      <Hatch x={1513} y={754} w={27} h={284} step={15} every={2} />
      <Hatch x={1548} y={447} w={78} h={10} step={14} />
      <Hatch x={1548} y={517} w={78} h={8} step={14} />
      <Hatch x={489} y={772} w={138} h={26} step={15} every={2} />
      <Hatch x={635} y={772} w={165} h={26} step={20} every={4} />
      <Hatch x={808} y={772} w={232} h={26} step={15} every={2} />
      <Hatch x={1432} y={772} w={74} h={26} step={17} />
      <Hatch x={727} y={806} w={9} h={46} step={12} />
      <Hatch x={727} y={1013} w={9} h={25} step={12} />

      {solid.map(([x1, y1, x2, y2]) => <rect key={`${x1}-${y1}-${x2}-${y2}`} x={x1} y={y1} width={x2 - x1} height={y2 - y1} />)}
      <path d="M498 692H1003" stroke="#fff" strokeWidth="2" strokeDasharray="8 7.700" />
      <path d="M577 694v69M897 701v62M1001 694v69M1400 341v46M1403 391h103" stroke="#fff" strokeWidth="2" strokeDasharray="7 7" />
      <path d="M1536 249v56M1536 341v216M1536 563v183M1536 754v284" stroke="#666" strokeWidth="1" />
      <path d="M730 860h6M730 1003h6" stroke="#fff" strokeWidth="4" />
      <path d="M1548 464h31v32h-31" fill="none" stroke="#000" strokeWidth="3.500" />

      {/* doors */}
      <g fill="none" stroke="#000" strokeWidth="8">
        <path d="M1048 781h9M1058 785v-28A155 155 0 0 1 1214 603" />
        <path d="M871 863C874 940 825 998 744 998" />
        <path d="M1432 591Q1470 572 1516 572" />
      </g>
      <path d="M1513 563h6v6h-6z" fill="#fff" />
      <path d="M1089 249C1103 270 1106 290 1107 305C1108 290 1110 268 1118 249" fill="none" stroke="#000" strokeWidth="9" />
      <rect x="1113" y="621" width="101" height="64" fill="#fff" />
      <text x="1125" y="673" fontSize="60">ДВ-</text>
      <g fontSize="46" fontWeight="bold" stroke="#000" strokeWidth="2">
        <text x="1092" y="752">ПР-1</text>
        <text transform="translate(1497 722) rotate(-90)">ПР-1</text>
      </g>

      {/* cursor cross */}
      <path d="M1106 420h108M1160 366v108" stroke="#000" strokeWidth="1.200" />

      {/* plumbing */}
      <g fill="none" stroke="#6bb09c" strokeWidth="1.600">
        <path d="M489 833h19v62h-19M508 836l45-3c28 2 44 18 44 31s-16 29-44 31l-45-3" />
        <ellipse cx="552" cy="864" rx="39" ry="25" />
        <circle cx="496" cy="864" r="3" />
        <path d="M561 1040V967h86v73M566 1036V972h76v64z" />
        <circle cx="604" cy="1004" r="5" />
      </g>

      {/* room labels */}
      <Ghost x={540} y={395}>046</Ghost>
      <Ghost x={492} y={461}>Коридор</Ghost>
      <Ghost x={505} y={527}>36.73м²</Ghost>
      <Ghost x={555} y={877}>037</Ghost>
      <Ghost x={514} y={943}>Туалет</Ghost>
      <Ghost x={531} y={1009}>2.02м²</Ghost>
      <Ghost x={1043} y={1034}>030</Ghost>

      {/* markers */}
      <path d="M1425 249v25h49v-25M1453 249v19" fill="none" stroke="#00f" strokeWidth="4" />
      <g fill="none" stroke="#f00" strokeWidth="4">
        <path d="M735 609H601L574 652" />
        <path d="M1626 353h-59l-70 28" />
        <path d="M668 840l43 74h-86z" />
      </g>
      <path d="M550 688l20-50 18 9z" fill="#f00" />
      <path d="M1450 398l47-26 6 15z" fill="#f00" />
      <text x="656" y="906" fontSize="50" fill="#f00">1</text>
    </svg>
  );
}

const actions = [
  'Показать все', 'Скрыть все', 'Альбомы', 'Объекты', 'Менеджер проекта', 'Выбор', 'База элементов', 'IFC',
  'I F C свойства', 'BCF', 'Проверка модели', 'Отчет о проверках', 'История 3D Построений', 'TDMS',
];

function ActionMenu() {
  const [current, setCurrent] = useState('База элементов');
  return (
    <div className="absolute top-[239px] left-[726px]">
      <div className="flex gap-[6px]">
        <label className="relative flex h-[26px] w-[180px] bg-[#d1d1d1]">
          <span className="sr-only">Действие</span>
          <select className="w-full appearance-none pl-[6px] outline-none" defaultValue="a">
            <option value="a">Выберите действие</option>
          </select>
          <span className="pointer-events-none absolute inset-y-0 right-0 flex w-5 items-center justify-center bg-[#b8b8b8]">
            <Ico box="0 0 10 6" className="h-[6px] w-[10px]"><path d="M1 1l4 4 4-4" /></Ico>
          </span>
        </label>
        <button className="h-[26px] w-[111px] bg-[#0078d7] pr-1 text-white">Показать все</button>
      </div>
      <ul className="grid h-[400px] w-[217px] auto-rows-fr bg-white">
        {actions.map((a) => (
          <li key={a} className="flex items-center">
            <button
              onClick={() => setCurrent(a)}
              className={clsx('relative h-[26px] w-full pl-[30px] text-left whitespace-nowrap', a === current && 'border-r border-b border-[#aaa] bg-[#dedede]')}
            >
              {a === current && <span className="absolute top-[9px] left-[11px] size-[6px] bg-black" />}
              {a}
            </button>
          </li>
        ))}
      </ul>
    </div>
  );
}

function Document() {
  return (
    <main className="flex min-w-0 flex-1 flex-col border border-[#8c8c8c] bg-[#d2d2d2]">
      <div className="flex h-[31px] shrink-0 items-center border-b border-[#999] pl-[2px] whitespace-nowrap">
        <button className="h-full w-[114px] overflow-hidden bg-[#cdcdcd] pl-8 text-left">Без имени0</button>
        <div className="flex h-full w-[490px] items-center bg-[#ebebeb] pr-2 pl-12">
          <button className="flex-1 text-left">Планы типового этажа (3 этаж_полы-отделка).dwg*</button>
          <button aria-label="Закрыть вкладку">
            <Ico box="0 0 12 12" className="size-3"><path d="M1 1l10 10M11 1L1 11" stroke="#777" strokeWidth="1.600" /></Ico>
          </button>
        </div>
        <button className="mr-[6px] ml-auto" aria-label="Список вкладок"><Down big /></button>
      </div>
      <div className="relative mr-px ml-[2px] min-h-0 flex-1 overflow-hidden bg-white">
        <Plan />
        <ActionMenu />
      </div>
      <div className="flex h-[31px] shrink-0 items-start border-t border-[#e8e8e8] pl-[2px] whitespace-nowrap">
        <button className="flex h-[26px] w-[52px] items-center pl-[5px]" aria-label="Список листов">
          <Ico box="0 0 18 18" className="size-[18px]">
            <path d="M1 1h16v16H1z" fill="#fff" stroke="#888" />
            <path d="M1 5h16" stroke="#2f8fd0" strokeWidth="3" />
            <path d="M1 10h16M1 14h16M4 1v16" stroke="#999" strokeWidth="1" />
          </Ico>
        </button>
        <button className="h-[26px] w-[72px] border-r border-[#e6e6e6] bg-[#cdcdcd]">Модель</button>
        <button className="h-[26px] w-[261px] bg-[#cdcdcd] pl-2 text-left">Кладочный план типового этажа</button>
        <button className="h-[26px] w-[303px] bg-[#ebebeb] pl-[10px] text-left">Маркировочный план типового этажа</button>
      </div>
    </main>
  );
}

/* ---------- call-outs above the window ---------- */

function Callouts() {
  return (
    <svg className="pointer-events-none absolute inset-0 h-full w-full font-['Noto_Sans_CJK_SC',sans-serif]" fill="#f00" aria-hidden="true">
      <g fill="none" stroke="#f00">
        <rect x="1135" y="144" width="42" height="35" rx="1" strokeWidth="6" />
        <rect x="1212" y="687" width="167" height="28" rx="1" strokeWidth="5" />
        <path d="M1211 703L165 245" strokeWidth="6" />
      </g>
      <path d="M142 234l30 3-9 17z" />
      <text x="1131" y="235" fontSize="44">1</text>
      <text x="1398" y="717" fontSize="50">2</text>
    </svg>
  );
}

export default function App() {
  return (
    <div className="relative flex h-screen min-h-[900px] flex-col overflow-hidden bg-white pt-3 pr-[11px] pb-[7px] pl-3 font-['Noto_Sans',sans-serif] text-[15px] leading-[20px] text-[#1c1c1c]">
      <Header />
      <Ribbon />
      <div className="flex min-h-0 flex-1 gap-1 border-t border-[#bbb] bg-[#d2d2d2] pr-2">
        <Sidebar />
        <div className="flex min-w-0 flex-1 pb-1"><Document /></div>
      </div>
      <Callouts />
    </div>
  );
}
